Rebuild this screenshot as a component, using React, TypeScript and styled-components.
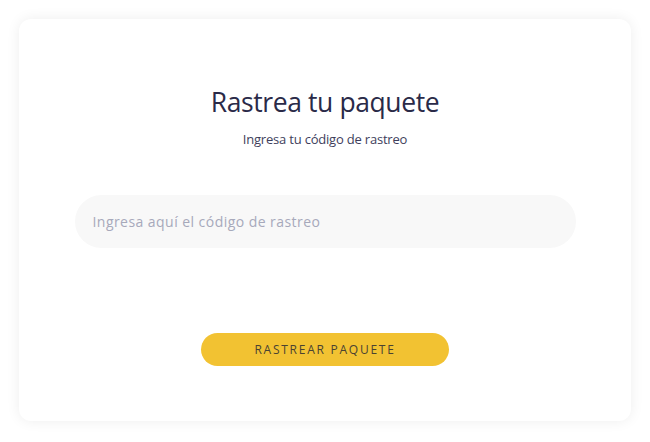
import styled, { createGlobalStyle } from 'styled-components';

const GlobalStyle = createGlobalStyle`
  body {
    margin: 0;
    background: #ffffff;
    font-family: 'Open Sans', 'Liberation Sans', sans-serif;
  }
`;

const Page = styled.div`
  padding: 19px;
`;

const Card = styled.div`
  width: 612px;
  height: 402px;
  box-sizing: border-box;
  background: #fff;
  border-radius: 12px;
  box-shadow: 0 0 14px rgba(0, 0, 0, 0.07);
  display: flex;
  flex-direction: column;
  align-items: center;
  padding-top: 65px;
`;

const Title = styled.h1`
  margin: 0;
  font-size: 26.5px;
  font-weight: 400;
  color: #2a2a48;
  letter-spacing: -0.4px;
`;

const Subtitle = styled.p`
  margin: 10px 0 0;
  font-size: 13px;
  color: #3e3e5c;
  letter-spacing: -0.2px;
`;

const Input = styled.input`
  margin-top: 47px;
  width: 501px;
  height: 53px;
  box-sizing: border-box;
  border: none;
  outline: none;
  border-radius: 27px;
  background: #f8f8f8;
  padding: 0 18px;
  font-family: inherit;
  font-size: 14px;
  letter-spacing: 0.45px;
  color: #333;
  &::placeholder {
    color: #a7a9bb;
  }
`;

const Button = styled.button`
  margin-top: 85px;
  width: 248px;
  height: 33px;
  border: none;
  border-radius: 17px;
  background: #f2c232;
  color: #4a4232;
  font-family: inherit;
  font-size: 12px;
  letter-spacing: 1.75px;
  cursor: pointer;
`;

export default function App() {
  return (
    <>
      <GlobalStyle />
      <Page>
        <Card>
          <Title>Rastrea tu paquete</Title>
          <Subtitle>Ingresa tu código de rastreo</Subtitle>
          <Input placeholder="Ingresa aquí el código de rastreo" />
          <Button>RASTREAR PAQUETE</Button>
        </Card>
      </Page>
    </>
  );
}
